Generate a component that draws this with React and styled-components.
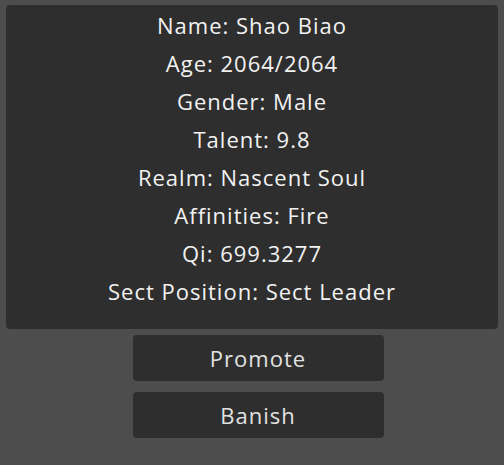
import React from 'react';
import styled, { createGlobalStyle } from 'styled-components';

const GlobalStyle = createGlobalStyle`
  html, body {
    margin: 0;
    padding: 0;
    background: #4d4d4d;
    font-family: 'Open Sans', 'Noto Sans', sans-serif;
  }
`;

const Page = styled.div`
  display: flex;
  flex-direction: column;
  align-items: center;
  padding: 5px 6px;
  gap: 6px;
`;

const InfoPanel = styled.div`
  align-self: stretch;
  background: #2e2e2e;
  border-radius: 4px;
  padding: 1px 0 19px;
  display: flex;
  flex-direction: column;
  align-items: center;
`;

const InfoLine = styled.div`
  color: #f2f2f2;
  font-size: 22px;
  font-weight: 500;
  letter-spacing: 1px;
  line-height: 38px;
`;

const Actions = styled.div`
  display: flex;
  flex-direction: column;
  gap: 11px;
  margin-left: 12px;
`;

const ActionButton = styled.button`
  width: 251px;
  height: 46px;
  background: #2e2e2e;
  border: none;
  border-radius: 4px;
  color: #e2e2e2;
  font-family: inherit;
  font-size: 22px;
  font-weight: 500;
  letter-spacing: 1px;
  cursor: pointer;
`;

const disciple = [
  ['Name', 'Shao Biao'],
  ['Age', '2064/2064'],
  ['Gender', 'Male'],
  ['Talent', '9.8'],
  ['Realm', 'Nascent Soul'],
  ['Affinities', 'Fire'],
  ['Qi', '699.3277'],
  ['Sect Position', 'Sect Leader'],
];

export default function App() {
  return (
    <>
      <GlobalStyle />
      <Page>
        <InfoPanel>
          {disciple.map(([label, value]) => (
            <InfoLine key={label}>
              {label}: {value}
            </InfoLine>
          ))}
        </InfoPanel>
        <Actions>
          <ActionButton>Promote</ActionButton>
          <ActionButton>Banish</ActionButton>
        </Actions>
      </Page>
    </>
  );
}
